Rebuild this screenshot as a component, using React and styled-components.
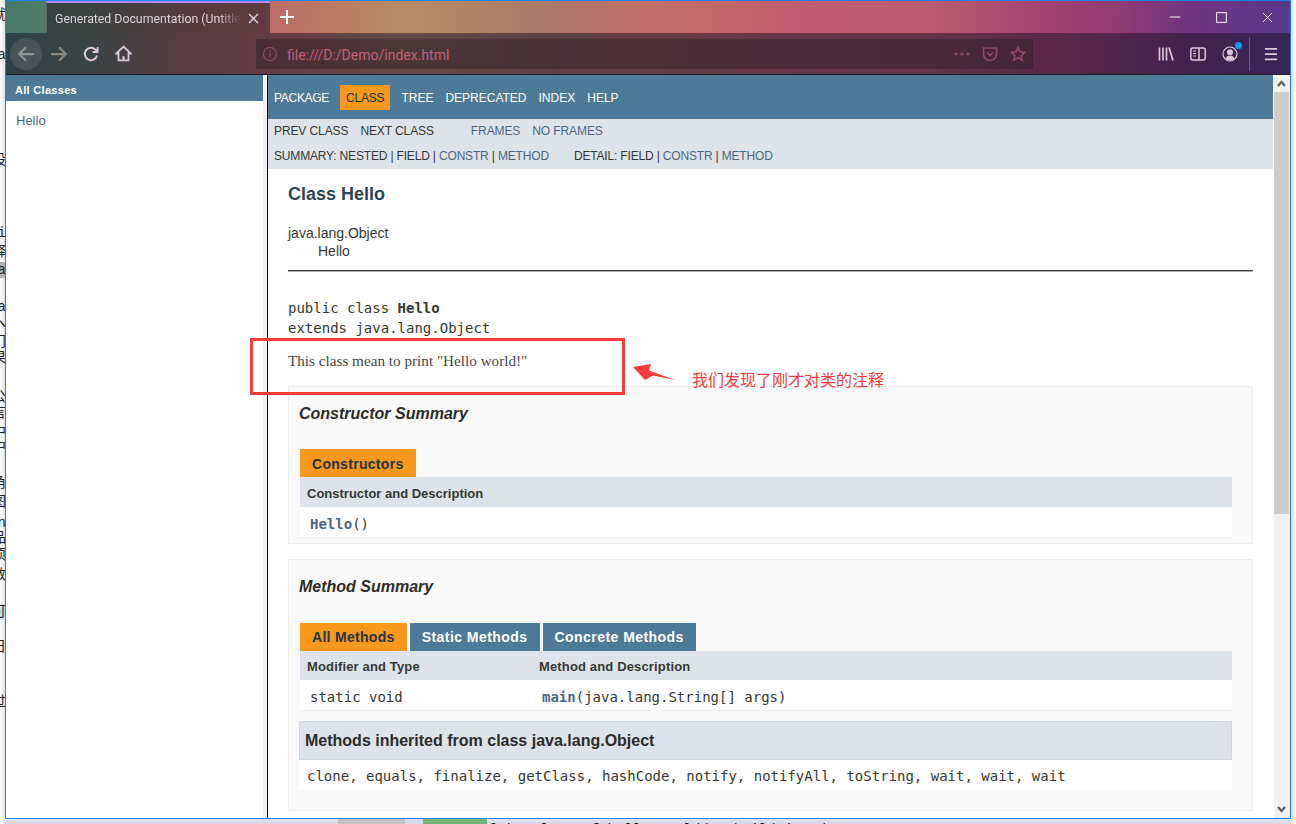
import React from "react";
import styled, { createGlobalStyle } from "styled-components";

const GlobalStyle = createGlobalStyle`
    html, body {
        margin: 0;
        padding: 0;
        background: #fff;
    }
    * {
        box-sizing: border-box;
    }
`

const Page = styled.div`
    position: relative;
    width: 1296px;
    height: 824px;
    overflow: hidden;
    display: grid;
    grid-template-columns: 5px 1286px 5px;
    grid-template-rows: 819px 5px;
    font-family: "Liberation Sans", Arial, sans-serif;
    color: #353833;
`

// the desktop behind the browser window
const LeftStrip = styled.div`
    grid-row: 1 / 3;
    overflow: hidden;
    background: linear-gradient(90deg, #fff 0%, #e2e2e2 100%);
`
const Glyph = styled.div`
    display: flex;
    justify-content: flex-end;
    height: 16px;
    line-height: 16px;
    margin-top: ${p => p.$gap}px;
    margin-right: -1px;
    white-space: nowrap;
    font-family: "Liberation Mono", "Noto Sans CJK SC", monospace;
    font-size: 14px;
    color: #222;
    background: ${p => p.$bg || "transparent"};
`
const RightStrip = styled.div`
    grid-row: 1 / 3;
    grid-column: 3;
    background: linear-gradient(90deg, #dcdcdc 0%, #fff 100%);
`
const BottomStrip = styled.div`
    grid-row: 2;
    grid-column: 2;
    display: flex;
    padding-left: 333px;
    overflow: hidden;
    background: linear-gradient(180deg, #e4e4ec 0%, #d6d6e8 100%);
`
const Gutter = styled.div`
    width: 67px;
    background: #c2c2c2;
`
const Marker = styled.div`
    width: 18px;
    background: #dcdce8;
`
const Changed = styled.div`
    width: 64px;
    background: #74b574;
`
const CodeTail = styled.div`
    flex: 1;
    padding-top: 3px;
    padding-left: 3px;
    font-family: "Liberation Mono", monospace;
    font-size: 14px;
    line-height: 16px;
    white-space: nowrap;
    color: #111;
`

const Window = styled.div`
    display: flex;
    flex-direction: column;
    border: 1px solid #1a84e0;
    background: #fff;
`
const Chrome = styled.div`
    height: 74px;
    flex-shrink: 0;
    background: linear-gradient(91deg, #46796a 0%, #5a8065 6%, #a56a60 15%, #bd6c66 21%, #b78b68 31%, #ab7668 43%, #c26e68 50%, #c25d70 62%, #bb5c70 72%, #a34270 81%, #943d72 86%, #70347f 92%, #5a3a8c 100%);
`
const TitleBar = styled.div`
    display: flex;
    height: 32px;
    padding-left: 40px;
`
const Tab = styled.div`
    display: flex;
    align-items: center;
    width: 224px;
    padding-left: 8px;
    border-top: 2px solid #b18aff;
    border-left: 1px solid rgba(255, 255, 255, 0.18);
    background: rgba(38, 30, 42, 0.62);
`
const TabTitle = styled.div`
    width: 186px;
    padding-top: 2px;
    overflow: hidden;
    white-space: nowrap;
    font-family: Roboto, sans-serif;
    font-size: 12.3px;
    color: #dcd2da;
    -webkit-mask-image: linear-gradient(90deg, #000 88%, transparent 100%);
    mask-image: linear-gradient(90deg, #000 88%, transparent 100%);
`
const TabClose = styled.div`
    display: flex;
    justify-content: center;
    width: 24px;
    color: #e0d4de;
`
const NewTab = styled.div`
    display: flex;
    align-items: center;
    justify-content: center;
    width: 34px;
    color: #fff;
`
const WindowControls = styled.div`
    display: flex;
    margin-left: auto;
`
const WindowButton = styled.div`
    display: flex;
    align-items: center;
    justify-content: center;
    width: 46px;
    color: #fff;
`
const Toolbar = styled.div`
    display: flex;
    align-items: center;
    height: 42px;
    padding: 0 3px 0 4px;
    border-bottom: 1px solid #221c26;
    background: rgba(30, 20, 40, 0.55);
`
const NavButton = styled.div`
    display: flex;
    align-items: center;
    justify-content: center;
    flex-shrink: 0;
    width: 32px;
    height: 32px;
    color: ${p => p.$color || "#dcc8dc"};
`
const BackButton = styled(NavButton)`
    margin-right: 1px;
    border-radius: 50%;
    background: rgba(255, 255, 255, 0.1);
`
const AddressBar = styled.div`
    display: flex;
    align-items: center;
    width: 777px;
    height: 30px;
    margin-left: 117px;
    padding: 0 7px 0 6px;
    border-radius: 2px;
    background: rgba(40, 28, 36, 0.42);
    color: #8f4a68;
`
const Url = styled.div`
    margin-left: 9px;
    padding-top: 2px;
    font-family: Roboto, sans-serif;
    font-size: 14px;
    color: #c4607c;
`
const AddressActions = styled.div`
    display: flex;
    align-items: center;
    gap: 12px;
    margin-left: auto;
`
const RightTools = styled.div`
    display: flex;
    align-items: center;
    margin-left: auto;
`
const Divider = styled.div`
    width: 1px;
    height: 34px;
    margin: 0 5px 0 3px;
    background: rgba(220, 200, 220, 0.3);
`

const Frames = styled.div`
    flex: 1;
    display: flex;
    min-height: 0;
`
const ClassFrame = styled.div`
    width: 257px;
    flex-shrink: 0;
`
const ClassHeader = styled.div`
    height: 26px;
    padding-left: 9px;
    line-height: 31px;
    background: #4d7a97;
    color: #fff;
    font-size: 11px;
    font-weight: bold;
    letter-spacing: 0.3px;
`
const ClassLink = styled.div`
    margin-top: 12px;
    padding-left: 10px;
    font-size: 13px;
    line-height: 16px;
    color: #4a6782;
`
const Splitter = styled.div`
    width: 4px;
    flex-shrink: 0;
    background: #f0f0f0;
    border-right: 1px solid #fafafa;
`
const DocFrame = styled.div`
    flex: 1;
    display: flex;
    min-width: 0;
    border-left: 1px solid #000;
`
const DocPane = styled.div`
    flex: 1;
    min-width: 0;
    padding-right: 1px;
    overflow: hidden;
`
const TopNav = styled.div`
    display: flex;
    align-items: flex-start;
    height: 44px;
    padding-top: 10px;
    background: #4d7a97;
`
const NavItem = styled.div`
    height: 25px;
    padding: 6px 6px 4px;
    margin: ${p => (p.$active ? "0 5px" : "0")};
    font-size: 12px;
    line-height: 15px;
    letter-spacing: ${p => p.$squeeze || 0}px;
    background: ${p => (p.$active ? "#f8981d" : "transparent")};
    color: ${p => (p.$active ? "#253441" : "#fff")};
`
const SubNav = styled.div`
    height: 50px;
    padding-left: 6px;
    background: #dee3e9;
    font-size: 12px;
`
const SubRow = styled.div`
    display: flex;
    align-items: center;
    height: ${p => p.$h}px;
    white-space: pre;
    letter-spacing: ${p => p.$squeeze}px;
`
const SubItem = styled.span`
    margin-left: ${p => p.$left || 0}px;
    color: ${p => (p.$link ? "#4a6782" : "#353833")};
`
const Link = styled.span`
    color: #4a6782;
`
const Content = styled.div`
    padding: 15px 20px 0;
`
const ClassTitle = styled.h2`
    margin: 0;
    font-size: 18px;
    line-height: 21px;
    font-weight: bold;
    color: #2c4557;
`
const Tree = styled.div`
    margin-top: 19px;
    margin-left: ${p => p.$indent || 0}px;
    font-size: 14px;
    line-height: 18px;
    color: #353833;
    & + & {
        margin-top: 0;
    }
`
const Rule = styled.div`
    height: 2px;
    margin-top: 10px;
    border-top: 1px solid #444;
    border-bottom: 1px solid #aaa;
`
const Signature = styled.pre`
    margin: 26px 0 0;
    font-family: "DejaVu Sans Mono", monospace;
    font-size: 14px;
    line-height: 20px;
    color: #353833;
`
const Description = styled.div`
    margin-top: 14px;
    font-family: "Liberation Serif", serif;
    font-size: 15.2px;
    line-height: 18px;
    color: #474747;
`
const Section = styled.section`
    margin-top: ${p => p.$top}px;
    padding: 18px 20px ${p => p.$bottom}px 11px;
    border: 1px solid #ededed;
    background: #f9f9f9;
`
const SectionTitle = styled.h3`
    margin: 0 0 0 -1px;
    font-size: 16px;
    line-height: 18px;
    font-weight: bold;
    font-style: italic;
    color: #2c2c2c;
`
const Tabs = styled.div`
    display: flex;
    gap: 3px;
    margin-top: ${p => p.$top}px;
`
const TableTab = styled.div`
    height: 28px;
    padding: 0 12px;
    line-height: ${p => p.$lh || 29}px;
    font-size: 14px;
    font-weight: bold;
    letter-spacing: ${p => (p.$active ? 0.3 : 0.45)}px;
    background: ${p => (p.$active ? "#f8981d" : "#4d7a97")};
    color: ${p => (p.$active ? "#253441" : "#fff")};
`
const TableHead = styled.div`
    display: grid;
    grid-template-columns: ${p => (p.$two ? "232px 1fr" : "1fr")};
    height: ${p => p.$h}px;
    align-items: center;
    padding-top: 2px;
    background: #dee3e9;
    font-size: 13px;
    font-weight: bold;
    letter-spacing: ${p => (p.$two ? 0.15 : 0)}px;
    color: #353833;
    span {
        padding-left: 7px;
    }
`
const TableRow = styled.div`
    display: grid;
    grid-template-columns: ${p => (p.$two ? "232px 1fr" : "1fr")};
    height: 31px;
    align-items: center;
    padding-top: 3px;
    border-bottom: 1px solid #ededed;
    background: #fff;
    font-family: "DejaVu Sans Mono", monospace;
    font-size: 14px;
    color: #353833;
    span {
        padding-left: 10px;
    }
    b {
        color: #4a6782;
    }
`
const InheritedTitle = styled.h3`
    height: 39px;
    margin: 10px 0 0 -1px;
    padding-left: 5px;
    line-height: 37px;
    border: 1px solid #d0d9e0;
    background: #dee3e9;
    font-size: 16px;
    font-weight: bold;
    color: #2c2c2c;
`
const InheritedRow = styled.div`
    height: 30px;
    margin-left: -1px;
    padding-left: 8px;
    line-height: 32px;
    background: #fff;
    font-family: "DejaVu Sans Mono", monospace;
    font-size: 14px;
    color: #353833;
`

const Scrollbar = styled.div`
    display: flex;
    flex-direction: column;
    width: 16px;
    flex-shrink: 0;
    padding-right: 1px;
    background: #f0f0f0;
`
const ScrollButton = styled.div`
    display: flex;
    align-items: center;
    justify-content: center;
    height: 17px;
    color: #606060;
`
const ScrollThumb = styled.div`
    height: 422px;
    margin-bottom: auto;
    background: #cdcdcd;
`

// red marks drawn over the screenshot
const NoteBox = styled.div`
    position: absolute;
    left: 250px;
    top: 338px;
    width: 375px;
    height: 57px;
    border: 3px solid #fc3a3a;
`
const NoteArrow = styled.svg`
    position: absolute;
    left: 630px;
    top: 360px;
`
const NoteText = styled.div`
    position: absolute;
    left: 692px;
    top: 368px;
    font-family: "Noto Sans CJK SC", sans-serif;
    font-size: 16px;
    line-height: 22px;
    font-weight: 400;
    color: #f53c3c;
    white-space: nowrap;
`

const Svg = ({ size = 16, children, ...rest }) => (
    <svg width={size} height={size} viewBox="0 0 16 16" fill="none" stroke="currentColor" strokeWidth="2" {...rest}>
        {children}
    </svg>
)

const Back = () => <Svg size={18}><path d="M15 8H2M8 2L2 8l6 6" /></Svg>
const Forward = () => <Svg size={18}><path d="M1 8h13M8 2l6 6-6 6" /></Svg>
const Reload = () => (
    <Svg size={16} strokeWidth="2">
        <path d="M14 9.5A6.2 6.2 0 1 1 12.4 3.6L14 5" />
        <path d="M14.6 1v5h-5" strokeWidth="1.8" />
    </Svg>
)
const Home = () => (
    <Svg size={17} strokeWidth="1.7">
        <path d="M8 1.5L1.2 8h2.1v6.5h9.4V8h2.1z" />
        <path d="M7 10.5h2v4H7z" fill="currentColor" stroke="none" />
    </Svg>
)
const InfoIcon = () => (
    <Svg size={16} strokeWidth="1.2">
        <circle cx="8" cy="8" r="6.6" />
        <path d="M8 7v4.5M8 4.2v1.4" strokeWidth="1.5" />
    </Svg>
)
const Dots = () => (
    <svg width="16" height="16" viewBox="0 0 16 16" fill="currentColor">
        <circle cx="2" cy="8" r="1.6" /><circle cx="8" cy="8" r="1.6" /><circle cx="14" cy="8" r="1.6" />
    </svg>
)
const Pocket = () => (
    <Svg size={16} strokeWidth="1.7">
        <path d="M1.5 2h13v6a6.5 6.5 0 0 1-13 0z" />
        <path d="M5 6.5L8 9.5l3-3" />
    </Svg>
)
const Star = () => (
    <Svg size={16} strokeWidth="1.7">
        <path d="M8 1.6l2 4.2 4.6.6-3.4 3.1.9 4.6L8 11.8l-4.1 2.3.9-4.6-3.4-3.1 4.6-.6z" />
    </Svg>
)
const LibraryIcon = () => (
    <Svg size={16} strokeWidth="1.7">
        <path d="M1.5 1.5v13M5 1.5v13M8.5 1.5v13M11 1.5l4 13" />
    </Svg>
)
const SidebarIcon = () => (
    <Svg size={16} strokeWidth="1.5">
        <rect x="0.8" y="2" width="14.4" height="12" rx="2" />
        <path d="M9 2v12" />
        <path d="M3 5h3M3 7.5h3M3 10h3" strokeWidth="1" />
    </Svg>
)
const AccountIcon = () => (
    <Svg size={16} strokeWidth="1.2">
        <circle cx="8" cy="8" r="7" />
        <circle cx="8" cy="6.2" r="3" fill="currentColor" stroke="none" />
        <path d="M3.5 12.5c.8-2 2.6-3 4.500-3s3.700 1 4.500 3c-1 1-2.800 2-4.500 2s-3.500-1-4.500-2z" fill="currentColor" stroke="none" />
    </Svg>
)
const AccountDot = styled.span`
    position: absolute;
    left: 21px;
    top: 4px;
    width: 7px;
    height: 7px;
    border-radius: 50%;
    background: #0a9cf0;
`
const AccountButton = styled(NavButton)`
    position: relative;
`
const Menu = () => <Svg size={14} strokeWidth="2"><path d="M1 2h14M1 8h14M1 14h14" /></Svg>
const Cross = ({ size = 12, weight = 1 }) => <Svg size={size} strokeWidth={weight}><path d="M1.500 1.500l13 13M14.500 1.500l-13 13" /></Svg>
const Chevron = ({ down }) => (
    <svg width="9" height="7" viewBox="0 0 9 7" fill="none" stroke="currentColor" strokeWidth="2.2">
        <path d={down ? "M1 1l3.500 4L8 1" : "M1 6l3.500-4L8 6"} />
    </svg>
)

const strayGlyphs = [
    ["就", 15], ["a", 55], ["设", 160], ["i", 233], ["释", 252], ["a", 270, "#b0b0b0"], ["a", 307], ["へ", 323],
    ["门", 342], ["果", 358], ["公", 397], ["言", 413], ["中", 432], ["中", 447], ["角", 483], ["图", 502],
    ["n", 523], ["品", 538], ["项", 555], ["数", 575], ["可", 612, "#cfe4f7"], ["日", 647], ["过", 702],
]

const Stray = () => {
    let bottom = 0
    return strayGlyphs.map(([ch, y, bg], i) => {
        const gap = y - 8 - bottom
        bottom = y + 8
        return <Glyph key={i} $gap={gap} $bg={bg}>{ch}</Glyph>
    })
}

const App = () => {
    return (
        <Page>
            <GlobalStyle />
            <LeftStrip><Stray /></LeftStrip>
            <Window>
                <Chrome>
                    <TitleBar>
                        <Tab>
                            <TabTitle>Generated Documentation (Untitled)</TabTitle>
                            <TabClose><Cross size={11} weight={2} /></TabClose>
                        </Tab>
                        <NewTab>
                            <Svg size={16} strokeWidth="2"><path d="M8 1v14M1 8h14" /></Svg>
                        </NewTab>
                        <WindowControls>
                            <WindowButton><Svg size={12} strokeWidth="1.3"><path d="M1 8h14" /></Svg></WindowButton>
                            <WindowButton><Svg size={11} strokeWidth="1.4"><rect x="1" y="1" width="14" height="14" /></Svg></WindowButton>
                            <WindowButton><Cross size={11} weight={1.2} /></WindowButton>
                        </WindowControls>
                    </TitleBar>
                    <Toolbar>
                        <BackButton $color="#8c9494"><Back /></BackButton>
                        <NavButton $color="#8a8a80"><Forward /></NavButton>
                        <NavButton><Reload /></NavButton>
                        <NavButton><Home /></NavButton>
                        <AddressBar>
                            <InfoIcon />
                            <Url>file:///D:/Demo/index.html</Url>
                            <AddressActions>
                                <Dots />
                                <Pocket />
                                <Star />
                            </AddressActions>
                        </AddressBar>
                        <RightTools>
                            <NavButton><LibraryIcon /></NavButton>
                            <NavButton><SidebarIcon /></NavButton>
                            <AccountButton><AccountIcon /><AccountDot /></AccountButton>
                            <Divider />
                            <NavButton><Menu /></NavButton>
                        </RightTools>
                    </Toolbar>
                </Chrome>
                <Frames>
                    <ClassFrame>
                        <ClassHeader>All Classes</ClassHeader>
                        <ClassLink>Hello</ClassLink>
                    </ClassFrame>
                    <Splitter />
                    <DocFrame>
                        <DocPane>
                            <TopNav>
                                <NavItem $squeeze={-0.3}>PACKAGE</NavItem>
                                <NavItem $active $squeeze={-0.2}>CLASS</NavItem>
                                <NavItem>TREE</NavItem>
                                <NavItem>DEPRECATED</NavItem>
                                <NavItem>INDEX</NavItem>
                                <NavItem>HELP</NavItem>
                            </TopNav>
                            <SubNav>
                                <SubRow $h={23} $squeeze={-0.1}>
                                    <SubItem>PREV CLASS</SubItem>
                                    <SubItem $left={12}>NEXT CLASS</SubItem>
                                    <SubItem $left={37} $link>FRAMES</SubItem>
                                    <SubItem $left={12} $link>NO FRAMES</SubItem>
                                </SubRow>
                                <SubRow $h={27} $squeeze={-0.17}>
                                    <SubItem>SUMMARY: NESTED | FIELD | <Link>CONSTR</Link> | <Link>METHOD</Link></SubItem>
                                    <SubItem $left={25}>DETAIL: FIELD | <Link>CONSTR</Link> | <Link>METHOD</Link></SubItem>
                                </SubRow>
                            </SubNav>
                            <Content>
                                <ClassTitle>Class Hello</ClassTitle>
                                <Tree>java.lang.Object</Tree>
                                <Tree $indent={30}>Hello</Tree>
                                <Rule />
                                <Signature>public class <b>Hello</b>{"\n"}extends java.lang.Object</Signature>
                                <Description>This class mean to print "Hello world!"</Description>
                                <Section $top={16} $bottom={5}>
                                    <SectionTitle>Constructor Summary</SectionTitle>
                                    <Tabs $top={26}>
                                        <TableTab $active $lh={31}>Constructors</TableTab>
                                    </Tabs>
                                    <TableHead $h={30}><span>Constructor and Description</span></TableHead>
                                    <TableRow><span><b>Hello</b>()</span></TableRow>
                                </Section>
                                <Section $top={15} $bottom={20}>
                                    <SectionTitle>Method Summary</SectionTitle>
                                    <Tabs $top={27}>
                                        <TableTab $active>All Methods</TableTab>
                                        <TableTab>Static Methods</TableTab>
                                        <TableTab>Concrete Methods</TableTab>
                                    </Tabs>
                                    <TableHead $two $h={29}>
                                        <span>Modifier and Type</span>
                                        <span>Method and Description</span>
                                    </TableHead>
                                    <TableRow $two>
                                        <span>static void</span>
                                        <span><b>main</b>(java.lang.String[] args)</span>
                                    </TableRow>
                                    <InheritedTitle>Methods inherited from class java.lang.Object</InheritedTitle>
                                    <InheritedRow>clone, equals, finalize, getClass, hashCode, notify, notifyAll, toString, wait, wait, wait</InheritedRow>
                                </Section>
                            </Content>
                        </DocPane>
                        <Scrollbar>
                            <ScrollButton><Chevron /></ScrollButton>
                            <ScrollThumb />
                            <ScrollButton><Chevron down /></ScrollButton>
                        </Scrollbar>
                    </DocFrame>
                </Frames>
            </Window>
            <RightStrip />
            <BottomStrip>
                <Gutter />
                <Marker />
                <Changed />
                <CodeTail>lthe class of hello world/to build javadoc</CodeTail>
            </BottomStrip>
            <NoteBox />
            <NoteArrow width="48" height="24" viewBox="0 0 48 24">
                <path d="M3 7L21 4l-2 6.500L45 20 23 15.500 15 20z" fill="#fc3a3a" />
            </NoteArrow>
            <NoteText>我们发现了刚才对类的注释</NoteText>
        </Page>
    )
}

export default App
